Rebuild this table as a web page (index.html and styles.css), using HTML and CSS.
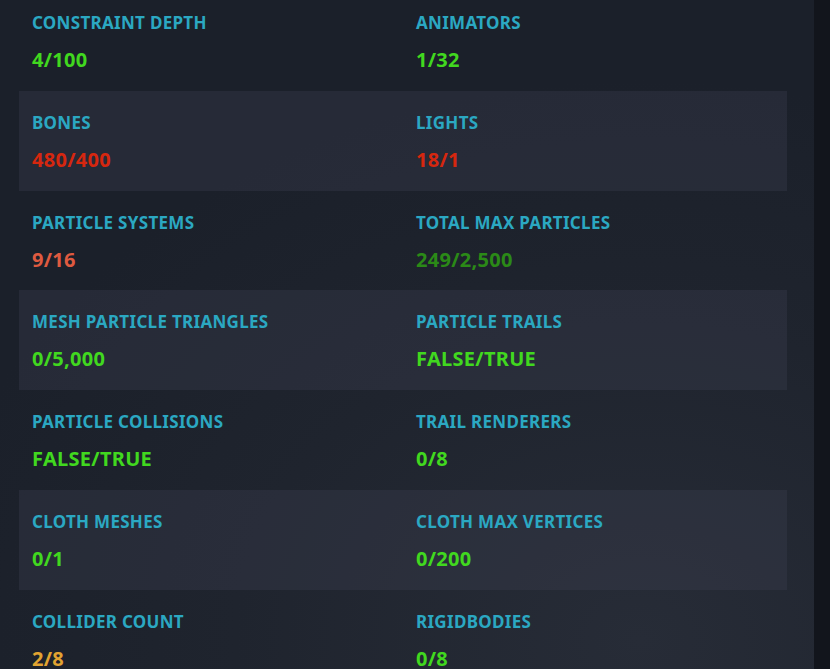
FILE: index.html
```html
<!DOCTYPE html>
<html>
<head>
<meta charset="utf-8">
<link rel="stylesheet" href="styles.css">
</head>
<body>
<div class="panel">
  <div class="list">
    <div class="row">
      <div class="stat"><div class="label">Constraint Depth</div><div class="value good">4/100</div></div>
      <div class="stat"><div class="label">Animators</div><div class="value good">1/32</div></div>
    </div>
    <div class="row alt">
      <div class="stat"><div class="label">Bones</div><div class="value bad">480/400</div></div>
      <div class="stat"><div class="label">Lights</div><div class="value bad">18/1</div></div>
    </div>
    <div class="row">
      <div class="stat"><div class="label">Particle Systems</div><div class="value warn">9/16</div></div>
      <div class="stat"><div class="label">Total Max Particles</div><div class="value ok">249/2,500</div></div>
    </div>
    <div class="row alt">
      <div class="stat"><div class="label">Mesh Particle Triangles</div><div class="value good">0/5,000</div></div>
      <div class="stat"><div class="label">Particle Trails</div><div class="value good">FALSE/TRUE</div></div>
    </div>
    <div class="row">
      <div class="stat"><div class="label">Particle Collisions</div><div class="value good">FALSE/TRUE</div></div>
      <div class="stat"><div class="label">Trail Renderers</div><div class="value good">0/8</div></div>
    </div>
    <div class="row alt">
      <div class="stat"><div class="label">Cloth Meshes</div><div class="value good">0/1</div></div>
      <div class="stat"><div class="label">Cloth Max Vertices</div><div class="value good">0/200</div></div>
    </div>
    <div class="row">
      <div class="stat"><div class="label">Collider Count</div><div class="value medium">2/8</div></div>
      <div class="stat"><div class="label">Rigidbodies</div><div class="value good">0/8</div></div>
    </div>
  </div>
</div>
</body>
</html>
```

FILE: styles.css
```css
html, body {
  margin: 0;
  padding: 0;
  background: #12151c;
  height: 100%;
  overflow: hidden;
}
.panel {
  width: 814px;
  height: 669px;
  overflow: hidden;
  background: radial-gradient(ellipse 900px 700px at 640px 640px, #272c37 0%, #1f242e 45%, #1b202a 80%);
  font-family: "Noto Sans", "Open Sans", sans-serif;
  font-weight: 700;
}
.list {
  margin: -9px 27px 0 19px;
}
.row {
  display: grid;
  grid-template-columns: 384px 1fr;
  height: 99.8px;
  box-sizing: border-box;
  padding: 21px 0 0 13px;
}
.row.alt {
  background: rgba(60, 64, 80, 0.35);
}
.label {
  color: #2ba8c2;
  font-size: 17px;
  text-transform: uppercase;
  letter-spacing: 0.3px;
  line-height: 22px;
}
.value {
  font-size: 20px;
  line-height: 26px;
  margin-top: 13px;
  letter-spacing: 0.3px;
}
.good { color: #41d81f; }
.bad { color: #d6270f; }
.warn { color: #df5a40; }
.ok { color: #2b8a17; }
.medium { color: #e2a431; }
```
